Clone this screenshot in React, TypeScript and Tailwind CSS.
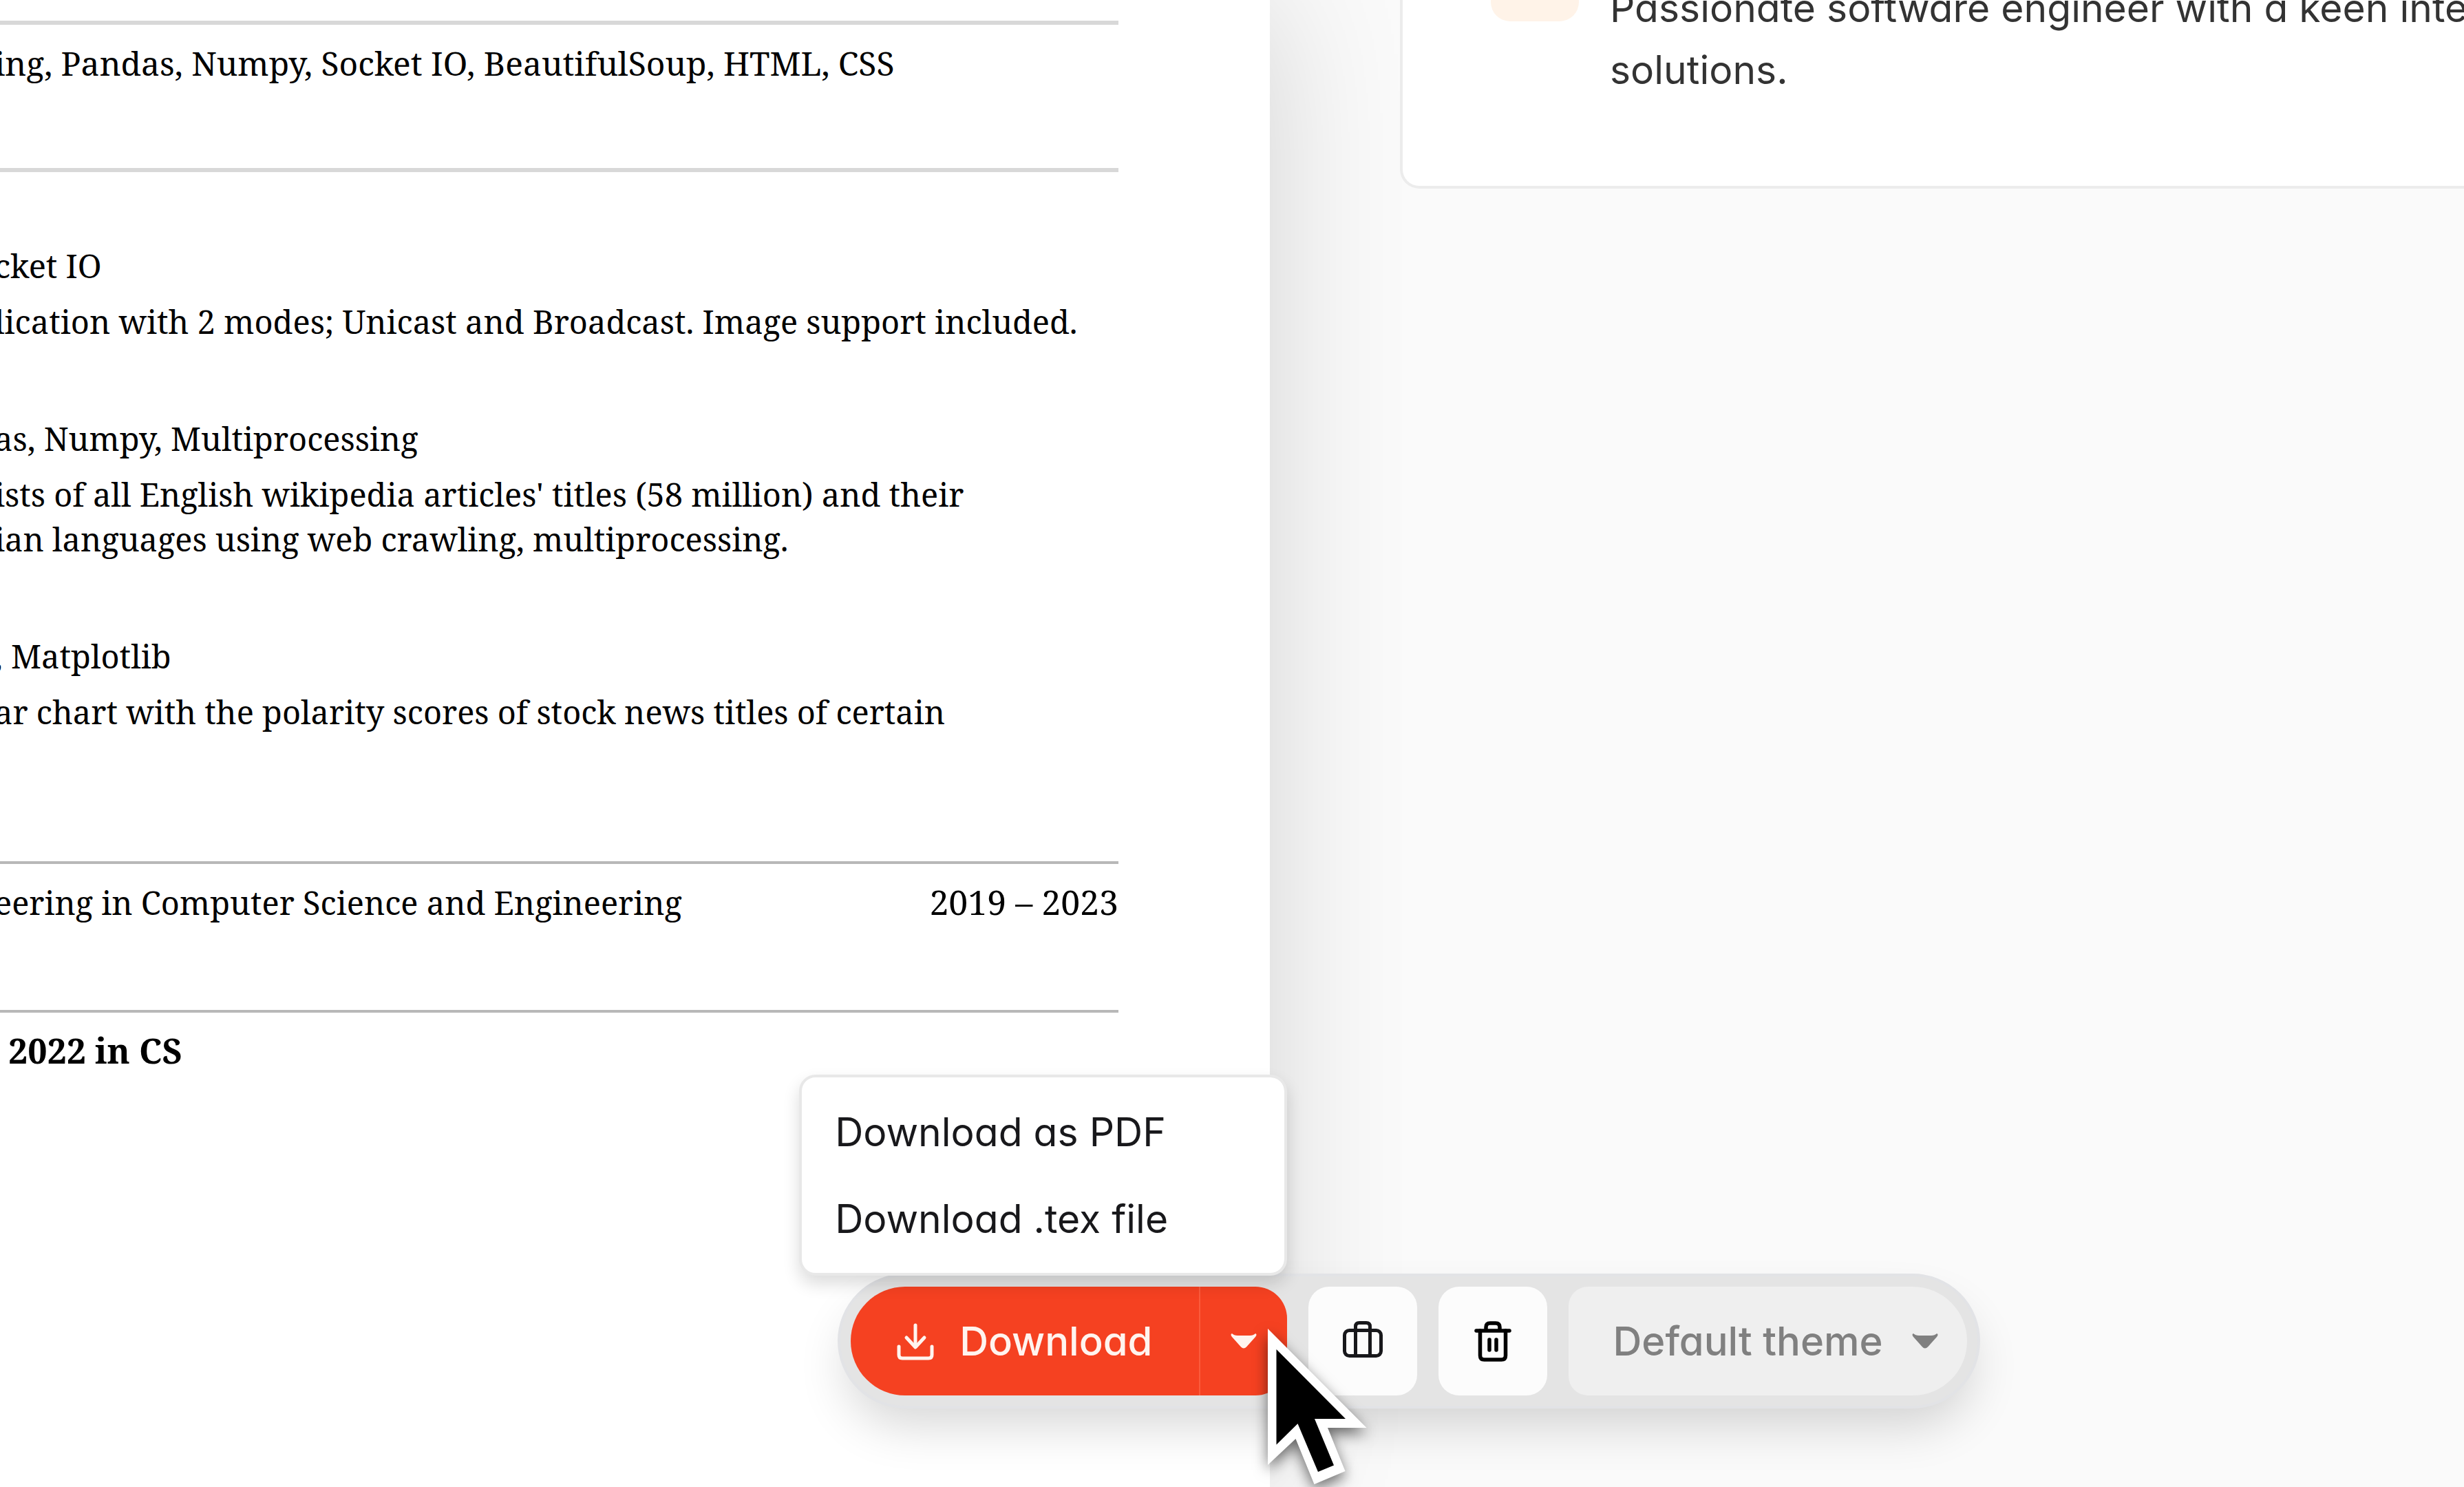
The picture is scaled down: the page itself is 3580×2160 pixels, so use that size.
import type { ReactNode } from "react";

const projects = [
  { tools: "cket IO", lines: ["lication with 2 modes; Unicast and Broadcast. Image support included."] },
  {
    tools: "as, Numpy, Multiprocessing",
    lines: [
      "ists of all English wikipedia articles' titles (58 million) and their",
      "ian languages using web crawling, multiprocessing.",
    ],
  },
  { tools: ", Matplotlib", lines: ["ar chart with the polarity scores of stock news titles of certain"] },
];

function DownloadIcon() {
  return (
    <svg viewBox="0 0 56 56" className="size-14" fill="none" stroke="currentColor" strokeWidth="5" strokeLinecap="round" strokeLinejoin="round" aria-hidden="true">
      <path d="M28 5v31" />
      <path d="M15 23l13 14 13-14" />
      <path d="M4 36v12q0 5 5 5h38q5 0 5-5V36" />
    </svg>
  );
}

function CaretIcon() {
  return (
    <svg viewBox="0 0 38 22" className="h-[22px] w-[38px]" fill="currentColor" aria-hidden="true">
      <path d="M2 0Q5 3 10 3H28Q33 3 36 0Q39 1 36 5L23 19.500Q19 23.500 15 19.500L2 5Q-1 1 2 0Z" />
    </svg>
  );
}

function SuitcaseIcon() {
  return (
    <svg viewBox="0 0 64 64" className="size-16" fill="none" stroke="currentColor" strokeWidth="5" aria-hidden="true">
      <rect x="5.500" y="16.500" width="53" height="37" rx="7" />
      <path d="M21.500 54V11q0-5.500 5.500-5.500h10q5.500 0 5.500 5.500v43" />
    </svg>
  );
}

function TrashIcon() {
  return (
    <svg viewBox="0 0 64 64" className="size-16" fill="none" stroke="currentColor" strokeWidth="5.500" strokeLinecap="round" aria-hidden="true">
      <path d="M8 17h48" />
      <path d="M13.500 17v36q0 6 6 6h25q6 0 6-6V17" />
      <path d="M22 16v-4q0-6 6-6h8q6 0 6 6v4" />
      <path d="M27 30v15M37 30v15" />
    </svg>
  );
}

function Pointer() {
  return (
    <svg viewBox="0 0 144 227" className="pointer-events-none absolute top-[1930px] left-[1842px] z-30 w-36 overflow-visible drop-shadow-[0_8px_10px_rgba(0,0,0,0.55)]" aria-hidden="true">
      <path fill="#fff" d="M0 0V198L40.500 160L67.500 226L112.500 207L87 144H143.500Z" />
      <path fill="#000" d="M12.500 30V168.500L43.500 138L73 208L96 198.500L68 131H113Z" />
    </svg>
  );
}

function Section({ rule, className, children }: { rule: string; className: string; children: ReactNode }) {
  return <section className={`mr-[220px] ${rule} ${className}`}>{children}</section>;
}

function Resume() {
  return (
    <article className="relative -ml-2 bg-white pt-[30px] font-['Noto_Serif','Liberation_Serif',serif] text-[47px] leading-[65px] whitespace-nowrap text-black shadow-[0_0_190px_rgba(0,0,0,0.16)]">
      <Section rule="border-t-6 border-[#d8d8d8]" className="pt-[23px] pb-[120px] text-5xl leading-[65px]">
        <p>ing, Pandas, Numpy, Socket IO, BeautifulSoup, HTML, CSS</p>
      </Section>
      <Section rule="border-t-6 border-[#d8d8d8]" className="flex flex-col gap-[105px] pt-[104px] pb-[184px]">
        {projects.map((project) => (
          <div key={project.tools} className="flex flex-col gap-4">
            <h3>{project.tools}</h3>
            <div>
              {project.lines.map((line) => (
                <p key={line}>{line}</p>
              ))}
            </div>
          </div>
        ))}
      </Section>
      <Section rule="border-t-4 border-[#b8b8b8]" className="flex items-baseline justify-between pt-[23px] pb-[123px]">
        <p>eering in Computer Science and Engineering</p>
        <p className="text-[50px]">2019 – 2023</p>
      </Section>
      <Section rule="border-t-4 border-[#b8b8b8]" className="pt-[23px]">
        <p className="pl-5 text-[50px] font-bold">2022 in CS</p>
      </Section>
    </article>
  );
}

function ProfileCard() {
  return (
    <div className="relative -mt-[227px] ml-[189px] flex gap-[45px] rounded-bl-[28px] border-4 border-r-0 border-[#ececec] bg-white pt-[126px] pb-[123px] pl-32">
      <div className="size-32 shrink-0 rounded-[28px] bg-[#fff3e8]" />
      <p className="pt-16 text-[57px] leading-[90px] whitespace-nowrap text-[#333]">
        Passionate software engineer with a keen inte
        <br />
        solutions.
      </p>
    </div>
  );
}

function DownloadMenu() {
  return (
    <div role="menu" className="absolute bottom-[189px] -left-[60px] z-10 flex w-[709px] flex-col rounded-[24px] border-4 border-[#e8e8e8] bg-white bg-clip-padding py-4 shadow-[0_12px_24px_rgba(0,0,0,0.14)]">
      <button role="menuitem" className="h-[126px] px-12 text-left">Download as PDF</button>
      <button role="menuitem" className="h-[126px] px-12 text-left">Download .tex file</button>
    </div>
  );
}

function Toolbar() {
  return (
    <div role="toolbar" className="absolute bottom-[114px] left-[34%] z-20 flex gap-[31px] rounded-full border-4 border-[#e2e3e6] bg-[#e4e4e4] p-[15px] text-[57px] leading-none text-[#18181b] shadow-[0_36px_70px_-12px_rgba(0,0,0,0.16)]">
      <DownloadMenu />
      <div className="flex h-[158px] overflow-hidden rounded-l-[79px] rounded-r-[46px] bg-[#f54121] text-[#fff4ef]">
        <button className="flex items-center gap-9 pr-[68px] pl-[66px] text-[58px] font-medium">
          <DownloadIcon />
          Download
        </button>
        <button aria-label="Download options" className="flex w-32 items-center justify-center border-l-2 border-[#fb5b3c]">
          <CaretIcon />
        </button>
      </div>
      <button aria-label="Portfolio" className="flex size-[158px] items-center justify-center rounded-[30px] bg-[#fcfcfc]">
        <SuitcaseIcon />
      </button>
      <button aria-label="Delete" className="flex size-[158px] items-center justify-center rounded-[30px] bg-[#fcfcfc] text-black">
        <TrashIcon />
      </button>
      <div className="relative flex text-[#808080]">
        <select aria-label="Theme" className="w-[579px] appearance-none rounded-l-[28px] rounded-r-[79px] bg-[#efefef] pl-16 text-[58px] font-medium">
          <option>Default theme</option>
        </select>
        <span className="pointer-events-none absolute inset-y-0 right-[42px] flex items-center">
          <CaretIcon />
        </span>
      </div>
    </div>
  );
}

export default function App() {
  return (
    <div className="relative grid h-screen grid-cols-[369fr_347fr] overflow-hidden bg-[#fafafa] font-['Inter','Liberation_Sans',sans-serif] [font-feature-settings:'cv11']">
      <Resume />
      <main className="min-w-0">
        <ProfileCard />
      </main>
      <Toolbar />
      <Pointer />
    </div>
  );
}
